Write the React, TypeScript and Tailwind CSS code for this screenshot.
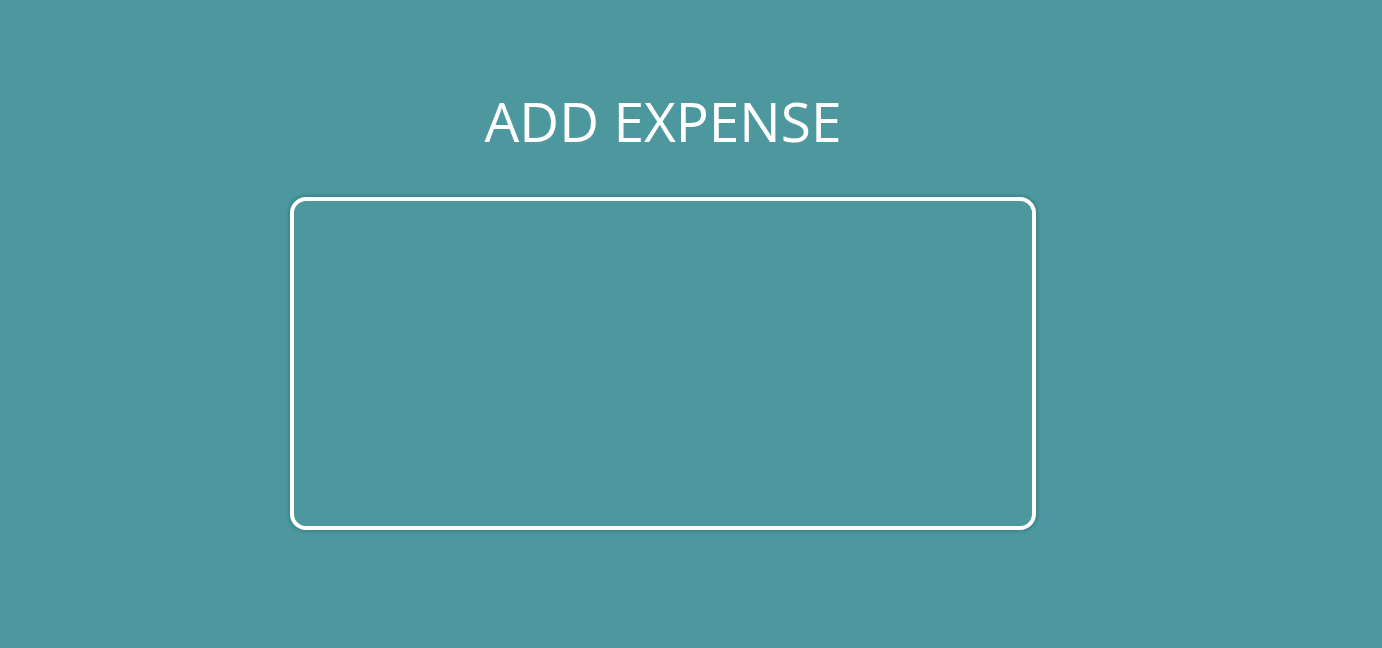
export default function App() {
  return (
    <div className="min-h-[648px] w-full bg-[#4c989e] font-['Open_Sans',sans-serif]">
      <div className="flex flex-col items-center pr-[56px] pt-[93px]">
        <h1 className="text-[55px] leading-none font-normal text-white">ADD EXPENSE</h1>
        <div className="mt-[49px] h-[333px] w-[746px] rounded-[16px] border-[4px] border-white shadow-[0_0_3px_2px_#3d858e]"></div>
      </div>
    </div>
  );
}
